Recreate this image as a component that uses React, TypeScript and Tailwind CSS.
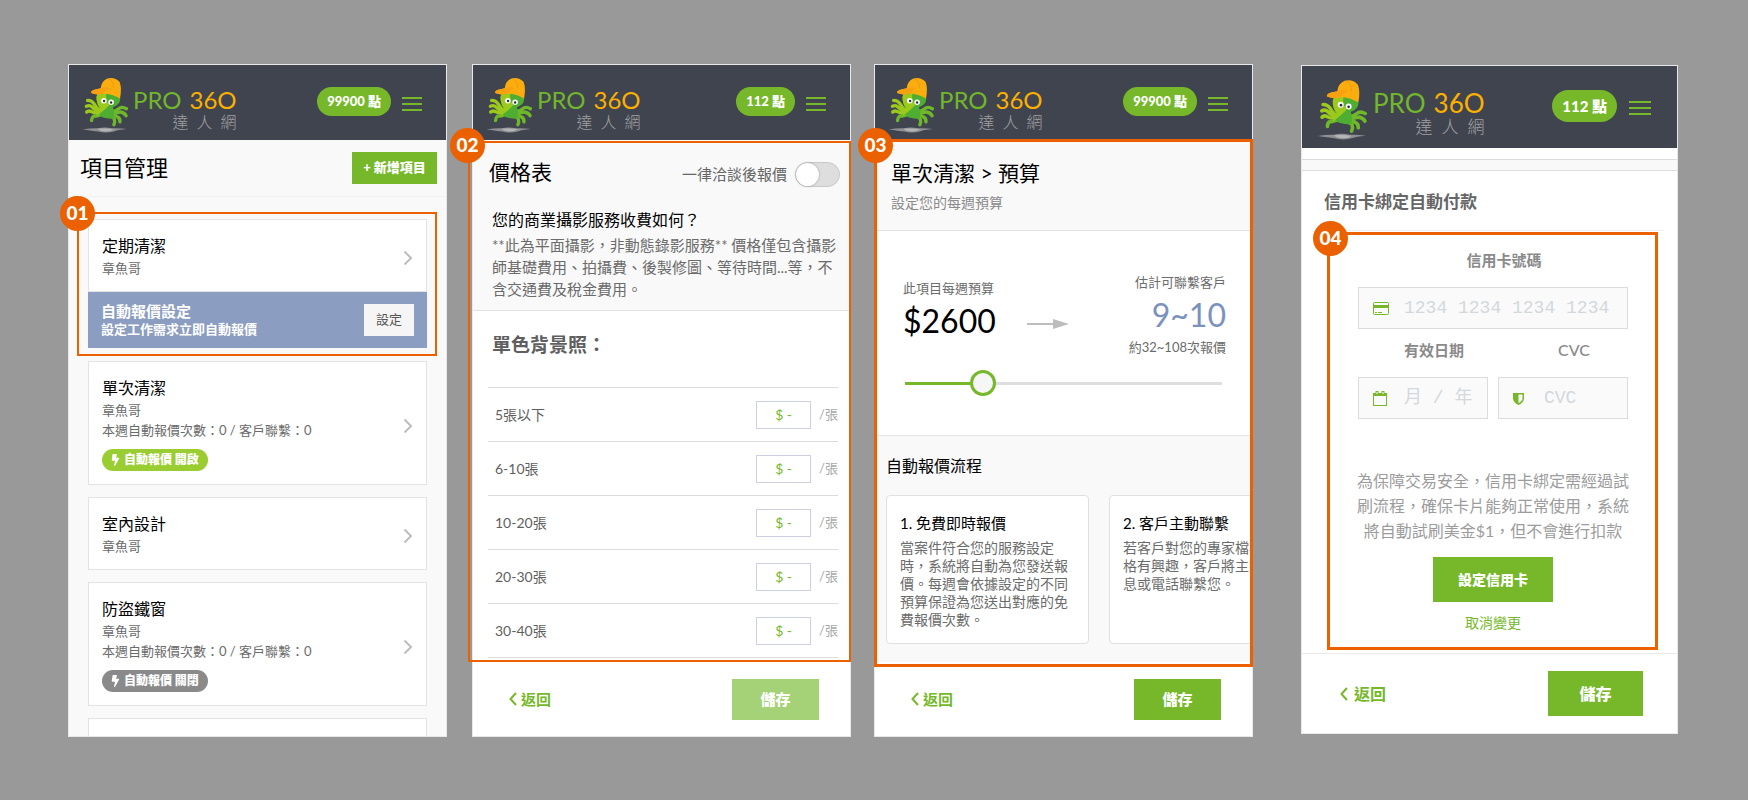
import React, { useState } from "react";
import { FaBolt } from "react-icons/fa";

const projects = [
  { title: "單次清潔", owner: "章魚哥", stats: "本週自動報價次數：0 / 客戶聯繫：0", status: "on" },
  { title: "室內設計", owner: "章魚哥" },
  { title: "防盜鐵窗", owner: "章魚哥", stats: "本週自動報價次數：0 / 客戶聯繫：0", status: "off" },
];

const priceRows = ["5張以下", "6-10張", "10-20張", "20-30張", "30-40張"];

const Mascot: React.FC<{ className: string }> = ({ className }) => (
  <svg viewBox="15 10 150 190" className={className} aria-hidden="true">
    <path d="M16 185 Q45 180 66 181 Q90 176 112 181 Q140 180 162 184 Q130 187 122 191 Q92 199 68 192 Q50 189 16 185Z" fill="#8f9093" />
    <path d="M66 183 Q90 180 118 184 Q112 192 90 192 Q72 190 66 183Z" fill="#b4b5b7" />
    {/* arms */}
    <g fill="none" stroke="#9bc91c" strokeWidth="11" strokeLinecap="round" strokeLinejoin="round">
      <path d="M78 124 Q62 118 56 104 Q48 90 33 90" />
      <path d="M76 126 Q58 124 48 112 Q40 104 29 109" />
      <path d="M78 130 Q58 134 44 126 Q36 122 30 128" />
    </g>
    <g fill="none" stroke="#6fb82a" strokeWidth="11" strokeLinecap="round" strokeLinejoin="round">
      <path d="M82 134 Q64 142 52 142 Q46 146 46 156" />
      <path d="M98 124 Q122 130 134 118 Q144 108 160 117" />
      <path d="M100 128 Q124 134 140 128 Q154 130 159 140" />
      <path d="M98 134 Q122 136 130 144 Q140 148 139 160" />
      <path d="M94 140 Q114 142 120 150 Q124 160 119 170" />
    </g>
    <path d="M62 80 Q62 62 100 60 Q138 62 140 84 Q139 106 116 112 Q124 132 118 150 Q98 150 84 146 Q64 142 74 118 Q62 102 62 80Z" fill="#4fae32" />
    <path d="M62 80 Q62 62 96 62 Q88 84 104 106 Q86 124 62 142 Q64 126 74 116 Q62 102 62 80Z" fill="#9bc91c" />
    <path d="M76 50 Q78 26 98 18 Q122 12 138 30 Q146 52 139 84 Q112 66 78 68 Q66 74 45 66 Q42 58 58 54Z" fill="#fbac0e" />
    <path d="M76 50 Q94 44 108 50 Q90 58 84 67 Q66 74 45 66 Q42 58 58 54Z" fill="#f7a010" />
    <path d="M100 18 Q118 24 118 50" fill="none" stroke="#e98f0a" strokeWidth="2" />
    <circle cx="86" cy="91" r="9" fill="#fff" />
    <circle cx="110" cy="96" r="9" fill="#fff" />
    <circle cx="87" cy="92" r="4" fill="#2b2f3a" />
    <circle cx="110" cy="97" r="4" fill="#2b2f3a" />
  </svg>
);

const Header: React.FC<{ points: string; large?: boolean }> = ({ points, large }) => (
  <header className={`flex items-start justify-between bg-[#40444f] ${large ? "h-[82px] pr-[26px] pl-[15px]" : "h-[75px] pr-6 pl-[13px]"}`}>
    <a href="#" className={`flex items-start ${large ? "gap-[6px] pt-3" : "gap-[5px] pt-[11px]"}`}>
      <Mascot className={large ? "h-[63px] w-[50px]" : "h-[58px] w-[46px]"} />
      <div className="flex flex-col items-end pt-3">
        <div className={`flex gap-2 ${large ? "text-[26px] leading-[26px]" : "text-[24px] leading-6"}`}>
          <span className="text-[#72b62b]">PRO</span>
          <span className="text-[#fbb000]">36O</span>
        </div>
        <div className={`flex font-light text-[#a0a0a3] ${large ? "gap-[9px] text-[17px] leading-[22px]" : "gap-2 text-[16px] leading-5"}`}>
          <span>達</span>
          <span>人</span>
          <span>網</span>
        </div>
      </div>
    </a>
    <div className={`flex items-center ${large ? "gap-3 pt-6" : "gap-[11px] pt-[22px]"}`}>
      <a
        href="#"
        className={`flex items-center rounded-full bg-[#76b82a] px-[10px] font-black text-white ${large ? "h-8 text-[15px]" : "h-[29px] text-[13px]"}`}
      >
        {points} 點
      </a>
      <button type="button" aria-label="選單" className={`flex flex-col gap-1 pt-1 ${large ? "w-[22px]" : "w-5"}`}>
        <span className="h-0.5 w-full bg-[#76b82a]" />
        <span className="h-0.5 w-full bg-[#76b82a]" />
        <span className="h-0.5 w-full bg-[#76b82a]" />
      </button>
    </div>
  </header>
);

const Footer: React.FC<{ large?: boolean; disabled?: boolean }> = ({ large, disabled }) => (
  <footer
    className={`mt-auto flex items-center justify-between bg-white ${
      large ? "h-20 border-t border-[#e9e9e9] pr-[34px] pl-[38px]" : "h-[74px] pr-[31px] pl-9"
    }`}
  >
    <a href="#" className={`flex items-center font-bold text-[#76b82a] ${large ? "gap-[6px] text-[16px]" : "gap-1 text-[15px]"}`}>
      <svg viewBox="0 0 8 14" className="h-[14px] w-2" fill="none" stroke="currentColor" strokeWidth="2">
        <path d="M7 1 1.500 7 7 13" />
      </svg>
      返回
    </a>
    <button
      type="button"
      className={`font-black text-white ${large ? "h-[45px] w-[95px] text-[16px]" : "h-[41px] w-[87px] text-[15px]"} ${
        disabled ? "bg-[#a6d277]" : "bg-[#76b82a]"
      }`}
    >
      儲存
    </button>
  </footer>
);

const StepBadge: React.FC<{ label: string; className: string }> = ({ label, className }) => (
  <span
    className={`absolute z-10 flex size-[35px] items-center justify-center rounded-full bg-[#eb6100] text-[19px] font-black text-white ${className}`}
  >
    {label}
  </span>
);

const Chevron = () => (
  <svg viewBox="0 0 10 16" className="mt-1 h-4 w-[10px] text-[#bdbdbd]" fill="none" stroke="currentColor" strokeWidth="2">
    <path d="M1.500 1.500 8 8 1.500 14.500" />
  </svg>
);

type ProjectProps = { title: string; owner: string; stats?: string; status?: string };

const ProjectCard: React.FC<ProjectProps> = ({ title, owner, stats, status }) => (
  <a href="#" className="flex items-center justify-between border border-[#e3e3e3] bg-white pt-[14px] pr-[13px] pb-[13px] pl-[13px]">
    <div>
      <h3 className="text-[16px] leading-6 text-black">{title}</h3>
      <p className="text-[13px] leading-5 text-[#6b6b6b]">{owner}</p>
      {stats && <p className="text-[13px] leading-5 text-[#6b6b6b]">{stats}</p>}
      {status && (
        <span
          className={`mt-[9px] flex h-[22px] w-fit items-center gap-1 rounded-full px-[9px] text-[12px] font-black text-white ${
            status === "on" ? "bg-[#9acd32]" : "bg-[#8a8a8a]"
          }`}
        >
          <FaBolt className="h-3 w-[9px]" />
          自動報價 {status === "on" ? "開啟" : "關閉"}
        </span>
      )}
    </div>
    <Chevron />
  </a>
);

const ProjectPanel = () => (
  <>
    <Header points="99900" />
    <main className="flex flex-1 flex-col bg-[#f9f9f9]">
      <div className="flex items-center justify-between border-b border-[#f1f1f1] py-3 pr-[9px] pl-[11px]">
        <h1 className="text-[22px] leading-8 text-black">項目管理</h1>
        <button type="button" className="h-8 w-[85px] bg-[#76b82a] text-[13px] font-black text-white">
          + 新增項目
        </button>
      </div>
      <div className="flex flex-col gap-3 px-[19px] pt-[22px]">
        <div className="relative mb-px">
          <ProjectCard title="定期清潔" owner="章魚哥" />
          <div className="flex h-14 items-center justify-between bg-[#8b9dc1] px-[13px] text-white">
            <div className="font-bold">
              <h4 className="text-[15px] leading-[18px]">自動報價設定</h4>
              <p className="text-[13px] leading-[18px]">設定工作需求立即自動報價</p>
            </div>
            <button type="button" className="h-8 w-[50px] bg-[#f5f5f5] text-[13px] text-[#555]">
              設定
            </button>
          </div>
          <div className="pointer-events-none absolute -top-[7px] -right-[10px] -bottom-2 -left-[11px] border-2 border-[#eb6100]" />
          <StepBadge label="01" className="-top-[23px] -left-7" />
        </div>
        {projects.map((project) => (
          <ProjectCard key={project.title} {...project} />
        ))}
        <div className="h-[18px] border border-b-0 border-[#e3e3e3] bg-white" />
      </div>
    </main>
  </>
);

const PricePanel = () => (
  <>
    <Header points="112" />
    <main className="relative pt-px">
      <section className="border-b border-[#e2e2e2] bg-[#f9f9f9] pt-[15px] pb-[10px]">
        <div className="flex items-start justify-between pr-[10px] pl-4">
          <h1 className="text-[21px] leading-8 text-black">價格表</h1>
          <label className="flex h-9 items-center gap-2 text-[15px] text-[#666]">
            一律洽談後報價
            <input
              type="checkbox"
              role="switch"
              className="h-[25px] w-[45px] appearance-none rounded-full border border-[#c8c8c8] bg-[#dedede] before:block before:size-[23px] before:rounded-full before:bg-white before:shadow-[0_0_2px_#888] checked:bg-[#76b82a] checked:before:ml-5"
            />
          </label>
        </div>
        <div className="pt-4 pr-3 pl-[19px]">
          <h2 className="text-[16px] leading-6 text-black">您的商業攝影服務收費如何？</h2>
          <p className="mt-0.5 text-[15px] leading-[22px] text-[#6b6b6b]">
            **此為平面攝影，非動態錄影服務** 價格僅包含攝影師基礎費用、拍攝費、後製修圖、等待時間...等，不含交通費及稅金費用。
          </p>
        </div>
      </section>
      <section className="bg-white pt-5 pr-3 pb-1 pl-[15px]">
        <h2 className="pl-1 text-[19px] leading-7 font-bold text-[#5f5f5f]">單色背景照：</h2>
        <table className="mt-7 w-full border-collapse text-[14px]">
          <tbody>
            {priceRows.map((row, i) => (
              <tr key={row} className="h-[54px] border-y border-[#dcdcdc]">
                <th scope="row" className="pl-[7px] text-left font-normal text-[#5f5f5f]">
                  <label htmlFor={`price-${i}`}>{row}</label>
                </th>
                <td>
                  <div className="flex items-center justify-end gap-2 text-[13px] text-[#a8a8a8]">
                    <input
                      id={`price-${i}`}
                      type="text"
                      defaultValue="$ -"
                      className="h-7 w-[55px] border border-[#ccd0e0] bg-white text-center text-[14px] text-[#76b82a]"
                    />
                    <span>/張</span>
                  </div>
                </td>
              </tr>
            ))}
          </tbody>
        </table>
      </section>
      <div className="pointer-events-none absolute top-px -right-px bottom-0 -left-[5px] border-2 border-[#eb6100]" />
      <StepBadge label="02" className="-top-3 -left-[23px]" />
    </main>
    <Footer disabled />
  </>
);

const FlowCard: React.FC<{ title: string; text: string }> = ({ title, text }) => (
  <div className="w-[203px] shrink-0 rounded border border-[#e0e0e0] bg-white px-[13px] pt-4 pb-[14px]">
    <h3 className="text-[15px] leading-[22px] text-black">{title}</h3>
    <p className="mt-[5px] text-[14px] leading-[18px] text-[#6b6b6b]">{text}</p>
  </div>
);

const BudgetPanel = () => {
  const [budget, setBudget] = useState(2600);
  const max = 11700;
  const filled = (budget / max) * 100;

  return (
    <>
      <Header points="99900" />
      <main className="relative">
        <section className="border-b border-[#e2e2e2] bg-[#f9f9f9] px-4 pt-[19px] pb-[17px]">
          <h1 className="text-[21px] leading-7 text-black">單次清潔 &gt; 預算</h1>
          <p className="mt-[6px] text-[14px] leading-5 text-[#8a8a8a]">設定您的每週預算</p>
        </section>
        <section className="border-b border-[#e6e6e6] bg-white pt-[41px] pr-[26px] pb-[39px] pl-7">
          <div className="flex items-start justify-between">
            <div className="flex gap-[31px]">
              <div className="pt-[6px]">
                <label htmlFor="budget" className="block text-[13px] leading-5 text-[#6b6b6b]">
                  此項目每週預算
                </label>
                <p className="mt-[3px] text-[32px] leading-10 text-black">${budget}</p>
              </div>
              <svg viewBox="0 0 42 10" className="mt-[47px] h-[10px] w-[42px]">
                <path d="M0 5h28" stroke="#bdbdbd" strokeWidth="2" />
                <path d="M26 0 42 5 26 10Z" fill="#bdbdbd" />
              </svg>
            </div>
            <div className="text-right text-[13px] leading-5 text-[#6b6b6b]">
              <p>估計可聯繫客戶</p>
              <p className="mt-[3px] mb-0.5 text-[32px] leading-10 text-[#7b92bd]">9~10</p>
              <p>約32~108次報價</p>
            </div>
          </div>
          <div className="mt-[13px] pr-1 pl-0.5">
            <input
              id="budget"
              type="range"
              min={0}
              max={max}
              step={100}
              value={budget}
              onChange={(e) => setBudget(Number(e.target.value))}
              style={{ backgroundImage: `linear-gradient(to right, #76b82a ${filled}%, #dedede ${filled}%)` }}
              className="block h-[26px] w-full appearance-none bg-[length:100%_3px] bg-center bg-no-repeat [&::-webkit-slider-thumb]:size-[26px] [&::-webkit-slider-thumb]:appearance-none [&::-webkit-slider-thumb]:rounded-full [&::-webkit-slider-thumb]:border-3 [&::-webkit-slider-thumb]:border-[#76b82a] [&::-webkit-slider-thumb]:bg-[#f6f6f6]"
            />
          </div>
        </section>
        <section className="-mr-px overflow-hidden bg-[#f9f9f9] pt-[18px] pb-[18px] pl-[11px]">
          <h2 className="text-[16px] leading-6 text-black">自動報價流程</h2>
          <div className="mt-[17px] flex gap-5">
            <FlowCard
              title="1. 免費即時報價"
              text="當案件符合您的服務設定時，系統將自動為您發送報價。每週會依據設定的不同預算保證為您送出對應的免費報價次數。"
            />
            <FlowCard title="2. 客戶主動聯繫" text="若客戶對您的專家檔案及價格有興趣，客戶將主動傳訊息或電話聯繫您。" />
          </div>
        </section>
        <div className="pointer-events-none absolute -inset-x-px -top-px -bottom-[5px] border-3 border-[#eb6100]" />
        <StepBadge label="03" className="-top-3 -left-[17px]" />
      </main>
      <Footer />
    </>
  );
};

const fieldClass =
  "h-[42px] w-full border border-[#dcdcdc] bg-[#fafafa] pl-[45px] font-['Liberation_Mono','Noto_Sans_CJK_TC',monospace] text-[18px] text-[#555] placeholder:text-[#d3d8dc]";

const CardPanel = () => (
  <>
    <Header points="112" large />
    <main className="bg-white pt-[11px] pb-[3px]">
      <div className="h-3 border-y border-[#dcdcdc] bg-[#f9f9f9]" />
      <h1 className="mt-[19px] pl-[22px] text-[17px] leading-6 font-bold text-[#666]">信用卡綁定自動付款</h1>
      <div className="mt-4 mr-[13px] ml-[25px] border-t border-[#efefef]" />
      <form className="relative mt-px mr-[19px] ml-[25px] flex flex-col items-center pt-[17px] pr-[30px] pb-[17px] pl-[31px]">
        <label htmlFor="card" className="pl-[22px] text-[15px] leading-[22px] font-bold text-[#8a8a8a]">
          信用卡號碼
        </label>
        <div className="relative mt-4 w-full">
          <svg viewBox="0 0 16 13" className="absolute top-[15px] left-[15px] h-[13px] w-4">
            <rect x="0.500" y="0.500" width="15" height="12" rx="1" fill="none" stroke="#76b82a" />
            <path d="M0 3h16v3H0z" fill="#76b82a" />
            <path d="M2 10.500h2M5 10.500h4" stroke="#76b82a" />
          </svg>
          <input id="card" type="text" placeholder="1234 1234 1234 1234" className={fieldClass} />
        </div>
        <div className="mt-[10px] grid w-full grid-cols-2 gap-[10px]">
          <div>
            <label htmlFor="expiry" className="block pl-[22px] text-center text-[15px] leading-[22px] font-bold text-[#8a8a8a]">
              有效日期
            </label>
            <div className="relative mt-4">
              <svg viewBox="0 0 14 15" className="absolute top-[14px] left-[15px] h-[15px] w-[14px]">
                <rect x="0.500" y="3" width="13" height="11.500" fill="none" stroke="#76b82a" />
                <path d="M0 2h14v3H0z" fill="#76b82a" />
                <path d="M4 0v4M10 0v4" stroke="#76b82a" strokeWidth="3" />
                <path d="M4 1v2M10 1v2" stroke="#fff" />
              </svg>
              <input id="expiry" type="text" placeholder="月 / 年" className={fieldClass} />
            </div>
          </div>
          <div>
            <label htmlFor="cvc" className="block pl-[22px] text-center text-[16px] leading-[22px] font-medium text-[#8a8a8a]">
              CVC
            </label>
            <div className="relative mt-4">
              <svg viewBox="0 0 11 13" className="absolute top-[15px] left-[15px] h-[13px] w-[11px]">
                <path d="M0 1h11v6q-1 4-5.500 6Q1 11 0 7Z" fill="#76b82a" />
                <path d="M5.500 2.500H9.500V7q-.500 2.500-4 4.300Z" fill="#fafafa" />
              </svg>
              <input id="cvc" type="text" placeholder="CVC" className={fieldClass} />
            </div>
          </div>
        </div>
        <p className="-mx-1 mt-[49px] text-center text-[16px] leading-[25px] text-[#9c9c9c]">
          為保障交易安全，信用卡綁定需經過試刷流程，確保卡片能夠正常使用，系統將自動試刷美金$1，但不會進行扣款
        </p>
        <button type="button" className="mt-[14px] h-[45px] w-[120px] bg-[#76b82a] text-[14px] font-black text-white">
          設定信用卡
        </button>
        <a href="#" className="mt-[11px] text-[14px] leading-5 text-[#76b82a]">
          取消變更
        </a>
        <div className="pointer-events-none absolute inset-0 border-3 border-[#eb6100]" />
        <StepBadge label="04" className="-top-[11px] -left-[14px]" />
      </form>
    </main>
    <Footer large />
  </>
);

const panelClass = "flex min-w-0 flex-col border border-[#e8e8e8] bg-white";

export default function App() {
  return (
    <div className="flex min-h-screen items-start bg-[#999] pt-16 pr-[70px] pb-[60px] pl-[68px] font-['Lato','Noto_Sans_CJK_TC',sans-serif]">
      <div className="flex flex-[1185] items-stretch">
        <div className={`${panelClass} flex-1`}>
          <ProjectPanel />
        </div>
        <div className={`${panelClass} ml-[25px] flex-1`}>
          <PricePanel />
        </div>
        <div className={`${panelClass} ml-[23px] flex-1`}>
          <BudgetPanel />
        </div>
      </div>
      <div className={`${panelClass} mt-px ml-12 flex-[375]`}>
        <CardPanel />
      </div>
    </div>
  );
}
